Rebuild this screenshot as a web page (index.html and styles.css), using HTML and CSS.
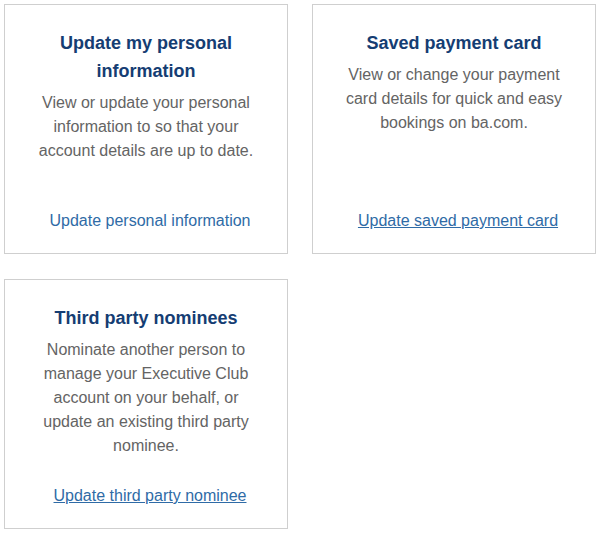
FILE: index.html
```html
<!DOCTYPE html>
<html lang="en">
<head>
<meta charset="utf-8">
<title>Account settings</title>
<link rel="stylesheet" href="styles.css">
</head>
<body>
<div class="grid">
  <section class="card">
    <h2 class="card-title">Update my personal information</h2>
    <p class="card-text">View or update your personal information to so that your account details are up to date.</p>
    <a class="card-link plain" href="#">Update personal information</a>
  </section>
  <section class="card">
    <h2 class="card-title">Saved payment card</h2>
    <p class="card-text">View or change your payment card details for quick and easy bookings on ba.com.</p>
    <a class="card-link" href="#">Update saved payment card</a>
  </section>
  <section class="card">
    <h2 class="card-title">Third party nominees</h2>
    <p class="card-text">Nominate another person to manage your Executive Club account on your behalf, or update an existing third party nominee.</p>
    <a class="card-link" href="#">Update third party nominee</a>
  </section>
</div>
</body>
</html>
```
FILE: styles.css
```css
* { box-sizing: border-box; }
html, body { margin: 0; padding: 0; background: #fff; }
body {
  font-family: "Liberation Sans", Arial, Helvetica, sans-serif;
  padding: 4px 0 0 4px;
}
.grid {
  display: grid;
  grid-template-columns: 284px 284px;
  column-gap: 24px;
  row-gap: 25px;
}
.card {
  height: 250px;
  border: 1px solid #cfcfcf;
  padding: 24px 30px 20px;
  display: flex;
  flex-direction: column;
  align-items: center;
  text-align: center;
}
.card-title {
  margin: 0;
  font-size: 18px;
  line-height: 28px;
  font-weight: bold;
  color: #153d73;
}
.card-text {
  margin: 6px 0 0;
  font-size: 16px;
  line-height: 24px;
  color: #646464;
}
.card-link {
  margin-top: auto;
  margin-left: 8px;
  font-size: 16px;
  line-height: 24px;
  color: #2f6ba6;
  text-decoration: underline;
}
.card-link.plain { text-decoration: none; }
```
